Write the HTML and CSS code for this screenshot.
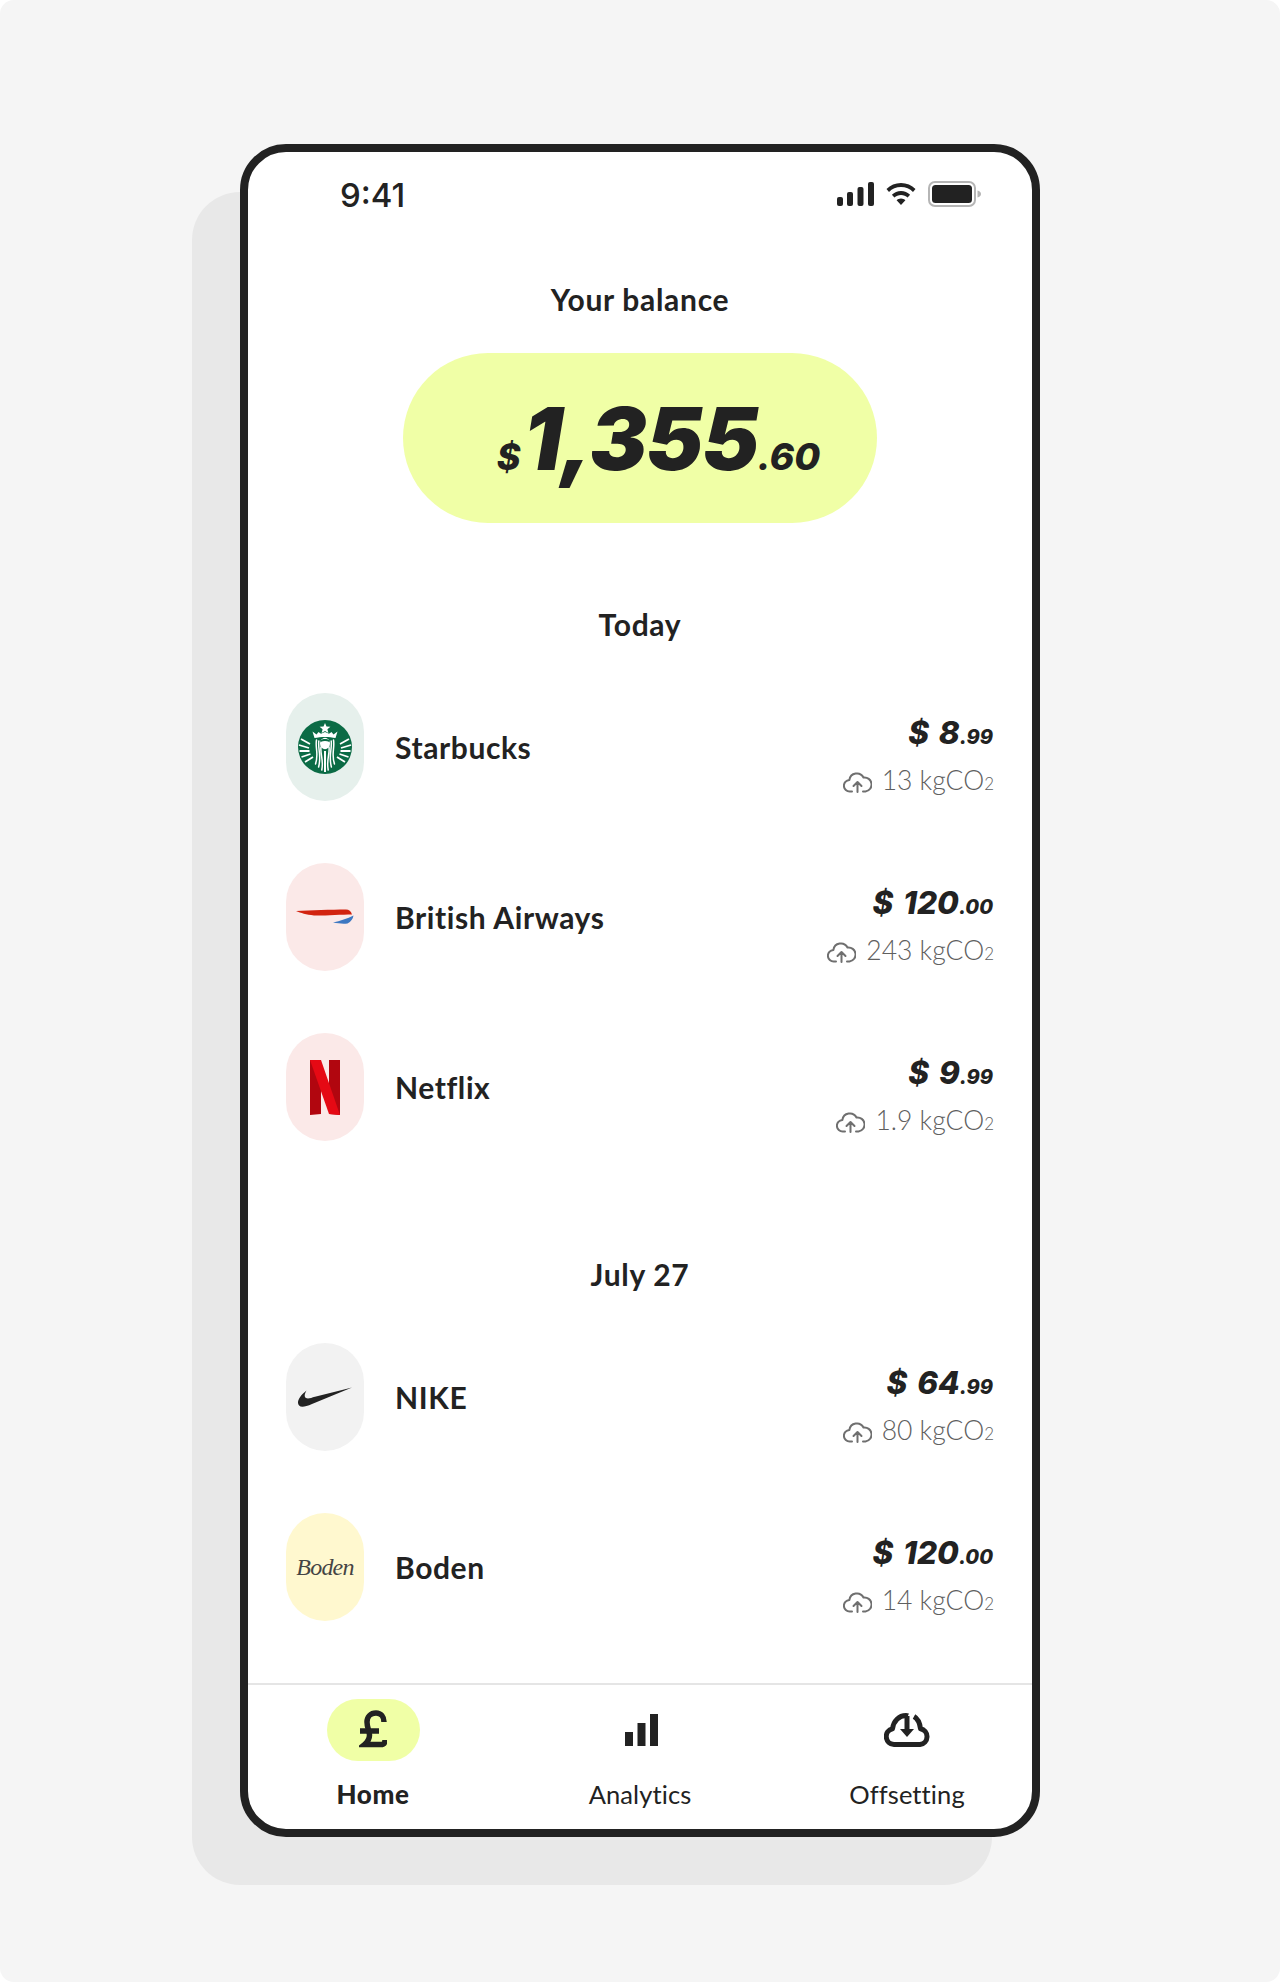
FILE: index.html
```html
<!DOCTYPE html>
<html lang="en">
<head>
<meta charset="utf-8">
<title>Balance</title>
<link rel="stylesheet" href="styles.css">
</head>
<body>
<svg class="defs" width="0" height="0" aria-hidden="true">
  <symbol id="cloud-up" viewBox="0 0 29 22">
    <g fill="none" stroke="#6f6f6f" stroke-width="2" stroke-linecap="round" stroke-linejoin="round">
      <path d="M9 20.500H7a5.800 5.800 0 0 1-.6-11.600A7.500 7.500 0 0 1 20.500 6.500a7 7 0 0 1 2 14H20"/>
      <path d="M14.500 21v-9.500M10.500 15l4-4 4 4"/>
    </g>
  </symbol>
</svg>
<div class="canvas">
  <div class="device">
    <div class="device-shadow"></div>
    <main class="phone">
      <header class="status">
        <span class="clock">9:41</span>
        <div class="status-icons">
          <svg width="37" height="24" viewBox="0 0 37 24" fill="#222"><rect x="0" y="15" width="6" height="9" rx="2"/><rect x="10" y="10" width="6" height="14" rx="2"/><rect x="20.500" y="5" width="6" height="19" rx="2"/><rect x="31" y="0" width="6" height="24" rx="2"/></svg>
          <svg width="30" height="22" viewBox="0 0 30 22" fill="#222"><path d="M15 0C9.400 0 4.300 2.300.5 6L3 9c3.100-3 7.300-4.900 12-4.900S23.900 6 27 9l2.500-3C25.700 2.300 20.600 0 15 0z"/><path d="M15 8c-3.500 0-6.700 1.400-9.100 3.700l2.500 2.900C10.100 13 12.400 12 15 12s4.900 1 6.600 2.600l2.500-2.900C21.700 9.400 18.500 8 15 8z"/><path d="M15 15.500c-1.700 0-3.300.7-4.400 1.800L15 22l4.400-4.700c-1.100-1.100-2.700-1.800-4.400-1.800z"/></svg>
          <svg width="53" height="26" viewBox="0 0 53 26"><rect x="1" y="1" width="46" height="24" rx="6" fill="none" stroke="#b5b5b5" stroke-width="2"/><rect x="4" y="4" width="40" height="18" rx="3.500" fill="#222"/><path d="M49.500 9.500c2 .6 3.500 1.800 3.500 3.500s-1.500 2.900-3.500 3.500z" fill="#b5b5b5"/></svg>
        </div>
      </header>

      <section class="balance">
        <h1 class="title">Your balance</h1>
        <div class="pill"><span class="cur">$</span><span class="big">1,355</span><span class="cents">.60</span></div>
      </section>

      <section class="group group-today">
        <h2 class="title">Today</h2>
        <ul class="rows">
          <li class="row">
            <div class="logo logo-green">
              <svg width="54" height="54" viewBox="0 0 54 54">
                <circle cx="27" cy="27" r="27" fill="#0b6b45"/>
                <path d="M27 3l1.500 3.600 3.900.2-3 2.500 1 3.800-3.400-2.100-3.400 2.100 1-3.800-3-2.500 3.900-.2z" fill="#fff"/>
                <path d="M14.500 11.500l4 3 2-2.500 2.500 1.800L27 12l4 1.800 2.500-1.800 2 2.500 4-3-2 6.500c-6-1.500-15-1.500-21 0z" fill="#fff"/>
                <path d="M3 19l9 5M1 25l10 3M1.500 31l10 0M3.500 37l9-3M7 42l8-5M51 19l-9 5M53 25l-10 3M52.500 31l-10 0M50.500 37l-9-3M47 42l-8-5" stroke="#fff" stroke-width="1.800" fill="none"/>
                <ellipse cx="27" cy="23.500" rx="5" ry="5.800" fill="#fff"/>
                <path d="M22.500 22c3-1.500 6-1.500 9 0v-1.800c-2.500-1.700-6.500-1.700-9 0z" fill="#0b6b45"/>
                <path d="M18.500 20c-1.500 8 2.500 14-1 24M20.800 21c-1 8 2.800 15-.2 26M23 27c-1 7 2.800 13 .8 23M35.500 20c1.500 8-2.500 14 1 24M33.200 21c1 8-2.800 15 .2 26M31 27c1 7-2.800 13-.8 23" stroke="#fff" stroke-width="1.500" fill="none" stroke-linecap="round"/>
                <path d="M26 31h2v21h-2z" fill="#fff"/>
              </svg>
            </div>
            <span class="name">Starbucks</span>
            <div class="figures">
              <div class="amount">$ 8<span class="small">.99</span></div>
              <div class="co2">
                <svg class="cloud" width="29" height="22"><use href="#cloud-up"/></svg>
                <span>13 kgCO<span class="sub">2</span></span>
              </div>
            </div>
          </li>
          <li class="row">
            <div class="logo logo-red">
              <svg width="58" height="16" viewBox="0 0 58 16"><path d="M0 2C15 1.500 35 .5 50 .5c3 0 5 1.500 6 5-11 0-31 1.500-38 1C10 5.500 5 4 0 2z" fill="#d2230f"/><path d="M57.500 6.500c-.5 3.500-2.500 6-6 8-5 .5-9 0-14.500-1 7-1.500 14.500-4 20.500-7z" fill="#3d78c2"/></svg>
            </div>
            <span class="name">British Airways</span>
            <div class="figures">
              <div class="amount">$ 120<span class="small">.00</span></div>
              <div class="co2">
                <svg class="cloud" width="29" height="22"><use href="#cloud-up"/></svg>
                <span>243 kgCO<span class="sub">2</span></span>
              </div>
            </div>
          </li>
          <li class="row">
            <div class="logo logo-red">
              <svg width="32" height="56" viewBox="0 0 32 56"><path d="M1 1h11v54l-11 1z" fill="#b1060f"/><path d="M20 1h11v55l-11-1z" fill="#b1060f"/><path d="M1 1h11l19 55-11-1z" fill="#e50914"/></svg>
            </div>
            <span class="name">Netflix</span>
            <div class="figures">
              <div class="amount">$ 9<span class="small">.99</span></div>
              <div class="co2">
                <svg class="cloud" width="29" height="22"><use href="#cloud-up"/></svg>
                <span>1.9 kgCO<span class="sub">2</span></span>
              </div>
            </div>
          </li>
        </ul>
      </section>

      <section class="group group-july">
        <h2 class="title">July 27</h2>
        <ul class="rows">
          <li class="row">
            <div class="logo logo-grey">
              <svg width="54" height="20" viewBox="0 0 54 20"><path d="M54 .5L14 17c-4 1.800-7.500 2.800-9.500 2.800-3 0-4.500-1.800-4.500-4C0 12 3 8 8.500 3.500 6.500 7 6 9.800 8 11c2 1 5 0 9-1.200z" fill="#222"/></svg>
            </div>
            <span class="name">NIKE</span>
            <div class="figures">
              <div class="amount">$ 64<span class="small">.99</span></div>
              <div class="co2">
                <svg class="cloud" width="29" height="22"><use href="#cloud-up"/></svg>
                <span>80 kgCO<span class="sub">2</span></span>
              </div>
            </div>
          </li>
          <li class="row">
            <div class="logo logo-yellow"><span class="boden">Boden</span></div>
            <span class="name">Boden</span>
            <div class="figures">
              <div class="amount">$ 120<span class="small">.00</span></div>
              <div class="co2">
                <svg class="cloud" width="29" height="22"><use href="#cloud-up"/></svg>
                <span>14 kgCO<span class="sub">2</span></span>
              </div>
            </div>
          </li>
        </ul>
      </section>

      <nav class="tabs">
        <a class="tab tab-active">
          <span class="tab-icon">
            <svg width="28" height="40" viewBox="0 0 28 40" fill="none" stroke="#222" stroke-width="5.500"><path d="M25 12c0-5-3-9-8-9-5.500 0-9 3.800-9 9 0 6 2.500 9 2.500 13 0 4-2 7-5 9.500h16c3 0 4.500-1 4.500-4.500"/><path d="M1 21h19"/></svg>
          </span>
          <span class="tab-label tab-label-active">Home</span>
        </a>
        <a class="tab">
          <span class="tab-icon">
            <svg class="bars" width="33" height="32" viewBox="0 0 33 32" fill="#222"><rect x="0" y="18" width="8" height="14"/><rect x="12.500" y="9" width="8" height="23"/><rect x="25" y="0" width="8" height="32"/></svg>
          </span>
          <span class="tab-label">Analytics</span>
        </a>
        <a class="tab">
          <span class="tab-icon">
            <svg width="46" height="34" viewBox="0 0 46 34" fill="none" stroke="#222" stroke-width="5" stroke-linejoin="round"><path d="M13 31.500H10a8 8 0 0 1-1.500-15.800C9.500 8 15 2.500 22 2.500c1 0 1.500 0 2 .2M30 3.500c3.500 2 5.700 6 6.500 12.200A8 8 0 0 1 36 31.500H13"/><path d="M23 3v15"/><path d="M16 16l7 8 7-8z" fill="#222" stroke="none"/></svg>
          </span>
          <span class="tab-label">Offsetting</span>
        </a>
      </nav>
    </main>
  </div>
</div>
</body>
</html>
```
FILE: styles.css
```css
* { box-sizing: border-box; }
html, body { margin: 0; padding: 0; background: #fff; }
body { font-family: "Lato", "Noto Sans", sans-serif; color: #222; }
h1, h2, ul { margin: 0; padding: 0; list-style: none; }
.defs { position: absolute; }

.canvas {
  width: 1280px;
  height: 1982px;
  background: #f5f5f5;
  border-radius: 14px;
  padding: 144px 240px 0;
}
.device { position: relative; width: 800px; height: 1693px; }
.device-shadow {
  position: absolute;
  left: -48px;
  top: 48px;
  width: 800px;
  height: 1693px;
  background: #e8e8e8;
  border-radius: 48px;
}
.phone {
  position: relative;
  height: 100%;
  background: #fff;
  border: 8px solid #222;
  border-radius: 46px;
  display: flex;
  flex-direction: column;
  overflow: hidden;
}

.status {
  height: 56px;
  margin-top: 15px;
  padding: 0 51px 0 92px;
  display: flex;
  align-items: center;
  justify-content: space-between;
}
.clock { font-family: "Inter", sans-serif; font-size: 33px; font-weight: 550; line-height: 1; }
.status-icons { display: flex; align-items: center; gap: 12px; margin-bottom: 3px; }

.title { font-size: 30px; font-weight: 700; text-align: center; line-height: 40px; color: #222; letter-spacing: .7px; }

.balance { margin-top: 56px; display: flex; flex-direction: column; align-items: center; gap: 34px; }
.pill {
  width: 474px;
  height: 170px;
  border-radius: 85px;
  background: #f0ffa6;
  display: flex;
  align-items: baseline;
  justify-content: center;
  padding-top: 36px;
  padding-left: 37px;
  font-family: "Inter", sans-serif;
  font-style: italic;
  font-weight: 900;
  line-height: 100px;
}
.cur { font-size: 36px; font-weight: 800; margin-right: 3px; }
.big { font-size: 86px; letter-spacing: -1.500px; }
.cents { font-size: 37.500px; font-weight: 800; }

.group-today { margin-top: 81px; }
.group-july { margin-top: 113px; }
.rows { margin-top: 49px; display: flex; flex-direction: column; gap: 62px; }
.row { display: flex; align-items: center; height: 108px; padding: 0 38px; }
.logo {
  width: 78px;
  height: 108px;
  border-radius: 39px;
  flex: none;
  display: flex;
  align-items: center;
  justify-content: center;
}
.logo-green { background: #e6f0ec; }
.logo-red { background: #fbe9e8; }
.logo-grey { background: #f2f2f2; }
.logo-yellow { background: #fff8cf; }
.boden { font-family: "Liberation Serif", serif; font-style: italic; font-size: 24px; color: #444; letter-spacing: -.8px; }
.name { margin-left: 31px; font-size: 30px; font-weight: 700; flex: 1; color: #222; letter-spacing: .6px; }

.figures { display: flex; flex-direction: column; align-items: flex-end; gap: 8px; padding-top: 22px; }
.amount { font-family: "Inter", sans-serif; font-style: italic; font-weight: 800; font-size: 31.500px; line-height: 36px; word-spacing: 3px; margin-right: 1px; }
.small { font-size: 20px; font-weight: 800; }
.co2 { display: flex; align-items: center; gap: 10px; color: #5f5f5f; font-size: 26.500px; font-weight: 300; line-height: 34px; }
.sub { font-size: 17px; }

.tabs {
  margin-top: auto;
  height: 146px;
  border-top: 2px solid #e5e5e5;
  display: flex;
  justify-content: space-between;
  padding: 14px 45px 0;
}
.tab { width: 160px; display: flex; flex-direction: column; align-items: center; gap: 15px; }
.tab-icon { width: 93px; height: 62px; border-radius: 31px; display: flex; align-items: center; justify-content: center; }
.tab-active .tab-icon { background: #f0ffa6; }
.bars { margin-left: 2px; }
.tab-label { font-size: 25.500px; font-weight: 400; line-height: 36px; letter-spacing: .1px; }
.tab-label-active { font-size: 26px; font-weight: 900; letter-spacing: .6px; }
```
